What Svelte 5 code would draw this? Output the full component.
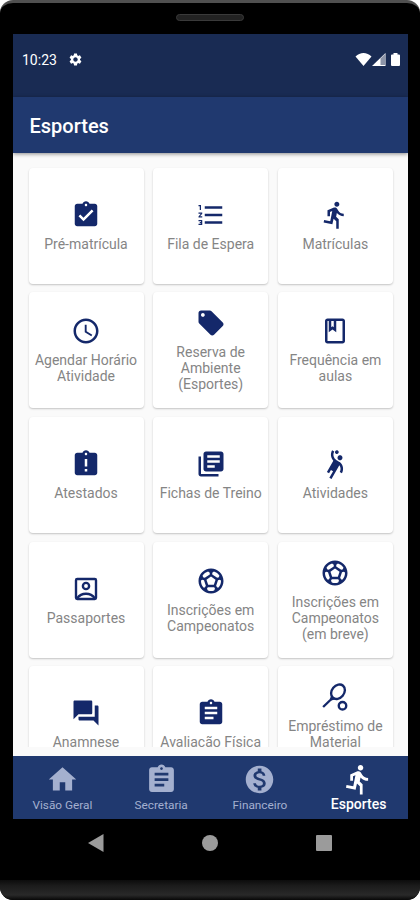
<script lang="ts">
  type Tile = { label: string; icon: string };

  const clipboard =
    "M19 3h-4.18C14.4 1.84 13.3 1 12 1c-1.3 0-2.4.84-2.82 2H5c-1.1 0-2 .9-2 2v14c0 1.1.9 2 2 2h14c1.1 0 2-.9 2-2V5c0-1.1-.9-2-2-2zm-7 0c.55 0 1 .45 1 1s-.45 1-1 1-1-.45-1-1 .45-1 1-1z";

  const icons: Record<string, string> = {
    done: clipboard + "m-2 14l-4-4 1.41-1.41L10 14.17l6.59-6.59L18 9l-8 8z",
    late: clipboard + "M13 18h-2v-2h2v2zm0-4h-2V8h2v6z",
    assignment: clipboard + "M14 17H7v-2h7v2zm3-4H7v-2h10v2zm0-4H7V7h10v2z",
    numbered:
      "M2 17h2v.5H3v1h1v.5H2v1h3v-4H2v1zm1-9h1V4H2v1h1v3zm-1 3h1.8L2 13.1v.9h3v-1H3.2L5 10.9V10H2v1zm5-6v2h14V5H7zm0 14h14v-2H7v2zm0-6h14v-2H7v2z",
    run: "M13.49 5.48c1.1 0 2-.9 2-2s-.9-2-2-2-2 .9-2 2 .9 2 2 2zm-3.6 13.9l1-4.4 2.1 2v6h2v-7.5l-2.1-2 .6-3c1.3 1.5 3.3 2.5 5.5 2.5v-2c-1.9 0-3.5-1-4.3-2.4l-1-1.6c-.4-.6-1-1-1.7-1-.3 0-.5.1-.8.1l-5.2 2.2v4.7h2v-3.4l1.8-.7-1.6 8.1-4.9-1-.4 2 7 1.4z",
    clock:
      "M11.99 2C6.47 2 2 6.48 2 12s4.47 10 9.99 10C17.52 22 22 17.52 22 12S17.52 2 11.99 2zM12 20c-4.42 0-8-3.58-8-8s3.58-8 8-8 8 3.58 8 8-3.58 8-8 8zm.5-13H11v6l5.25 3.15.75-1.23-4.5-2.67z",
    tag: "M21.41 11.58l-9-9C12.05 2.22 11.55 2 11 2H4c-1.1 0-2 .9-2 2v7c0 .55.22 1.05.59 1.42l9 9c.36.36.86.58 1.41.58.55 0 1.05-.22 1.41-.59l7-7c.37-.36.59-.86.59-1.41 0-.55-.23-1.06-.59-1.42zM5.5 7C4.67 7 4 6.33 4 5.5S4.67 4 5.5 4 7 4.67 7 5.5 6.33 7 5.5 7z",
    book: "M18 2H6c-1.1 0-2 .9-2 2v16c0 1.1.9 2 2 2h12c1.1 0 2-.9 2-2V4c0-1.1-.9-2-2-2zM9 4h2v5l-1-.75L9 9V4zm9 16H6V4h1v9l3-2.25L13 13V4h5v16z",
    library:
      "M4 6H2v14c0 1.1.9 2 2 2h14v-2H4V6zm16-4H8c-1.1 0-2 .9-2 2v12c0 1.1.9 2 2 2h12c1.1 0 2-.9 2-2V4c0-1.1-.9-2-2-2zm-1 9H9V9h10v2zm-4 4H9v-2h6v2zm4-8H9V5h10v2z",
    handball:
      "M14.27 6C13.72 6.95 14.05 8.18 15 8.73c.95.55 2.18.22 2.73-.73.55-.95.22-2.18-.73-2.73-.95-.55-2.18-.22-2.73.73zM15.84 10.41s-1.63-.94-2.6-1.5c-2.38-1.38-3.2-4.44-1.82-6.82l-1.73-1C8.1 3.83 8.6 7.21 10.66 9.4l-5.15 8.92 1.73 1 1.5-2.6 1.73 1-3 5.2 1.73 1 6.29-10.89c1.14 1.55 1.33 3.69.31 5.46l1.73 1c1.6-2.75 1.28-6.58-1.69-9.08zM12.75 3.8c.72.41 1.63.17 2.05-.55.41-.72.17-1.63-.55-2.05-.72-.41-1.63-.17-2.05.55-.41.72-.17 1.64.55 2.05z",
    soccer:
      "M12 2C6.48 2 2 6.48 2 12s4.48 10 10 10 10-4.48 10-10S17.52 2 12 2zm1 3.3l1.35-.95c1.82.56 3.37 1.76 4.38 3.34l-.39 1.34-1.35.46L13 6.7V5.3zm-3.35-.95L11 5.3v1.4L7.01 9.49l-1.35-.46-.39-1.34c1.01-1.57 2.56-2.77 4.38-3.34zM7.08 17.11l-1.14.1C4.73 15.81 4 13.99 4 12c0-.12.01-.23.02-.35l1-.73 1.38.48 1.46 4.34-.78 1.37zm7.42 2.48c-.79.26-1.63.41-2.5.41s-1.71-.15-2.5-.41l-.69-1.49.64-1.1h5.11l.64 1.11-.7 1.48zM14.27 15H9.73l-1.35-4.02L12 8.44l3.63 2.54L14.27 15zm3.79 2.21l-1.14-.1-.79-1.37 1.46-4.34 1.39-.47 1 .73c.01.11.02.22.02.34 0 1.99-.73 3.81-1.94 5.21z",
    forum:
      "M21 6h-2v9H6v2c0 .55.45 1 1 1h11l4 4V7c0-.55-.45-1-1-1zm-4 6V3c0-.55-.45-1-1-1H3c-.55 0-1 .45-1 1v14l4-4h10c.55 0 1-.45 1-1z",
    home: "M10 20v-6h4v6h5v-8h3L12 3 2 12h3v8z",
    money:
      "M12 2C6.48 2 2 6.48 2 12s4.48 10 10 10 10-4.48 10-10S17.52 2 12 2zm1.41 16.09V20h-2.67v-1.93c-1.71-.36-3.16-1.46-3.27-3.4h1.96c.1 1.05.82 1.87 2.65 1.87 1.96 0 2.4-.98 2.4-1.59 0-.83-.44-1.61-2.67-2.14-2.48-.6-4.18-1.62-4.18-3.67 0-1.72 1.39-2.84 3.11-3.21V4h2.67v1.95c1.86.45 2.79 1.86 2.85 3.39H14.3c-.05-1.11-.64-1.87-2.22-1.87-1.5 0-2.4.68-2.4 1.64 0 .84.65 1.39 2.67 1.91s4.18 1.39 4.18 3.91c-.01 1.83-1.38 2.83-3.12 3.16z",
    settings:
      "M19.14 12.94c.04-.3.06-.61.06-.94 0-.32-.02-.64-.07-.94l2.03-1.58c.18-.14.23-.41.12-.61l-1.92-3.32c-.12-.22-.37-.29-.59-.22l-2.39.96c-.5-.38-1.03-.7-1.62-.94l-.36-2.54c-.04-.24-.24-.41-.48-.41h-3.84c-.24 0-.43.17-.47.41l-.36 2.54c-.59.24-1.13.57-1.62.94l-2.39-.96c-.22-.08-.47 0-.59.22L2.74 8.87c-.12.21-.08.47.12.61l2.03 1.58c-.05.3-.09.63-.09.94s.02.64.07.94l-2.03 1.58c-.18.14-.23.41-.12.61l1.92 3.32c.12.22.37.29.59.22l2.39-.96c.5.38 1.03.7 1.62.94l.36 2.54c.05.24.24.41.48.41h3.84c.24 0 .44-.17.47-.41l.36-2.54c.59-.24 1.13-.56 1.62-.94l2.39.96c.22.08.47 0 .59-.22l1.92-3.32c.12-.22.07-.47-.12-.61l-2.01-1.58zM12 15.6c-1.98 0-3.6-1.62-3.6-3.6s1.62-3.6 3.6-3.6 3.6 1.62 3.6 3.6-1.62 3.6-3.6 3.6z",
  };

  const tiles: Tile[] = [
    { label: "Pré-matrícula", icon: "done" },
    { label: "Fila de Espera", icon: "numbered" },
    { label: "Matrículas", icon: "run" },
    { label: "Agendar Horário\nAtividade", icon: "clock" },
    { label: "Reserva de\nAmbiente\n(Esportes)", icon: "tag" },
    { label: "Frequência em\naulas", icon: "book" },
    { label: "Atestados", icon: "late" },
    { label: "Fichas de Treino", icon: "library" },
    { label: "Atividades", icon: "handball" },
    { label: "Passaportes", icon: "portrait" },
    { label: "Inscrições em\nCampeonatos", icon: "soccer" },
    { label: "Inscrições em\nCampeonatos\n(em breve)", icon: "soccer" },
    { label: "Anamnese", icon: "forum" },
    { label: "Avaliação Física", icon: "assignment" },
    { label: "Empréstimo de\nMaterial\n\u00a0", icon: "tennis" },
  ];

  const tabs: Tile[] = [
    { label: "Visão Geral", icon: "home" },
    { label: "Secretaria", icon: "assignment" },
    { label: "Financeiro", icon: "money" },
    { label: "Esportes", icon: "run" },
  ];

  let active = $state("Esportes");
</script>

{#snippet glyph(name: string)}
  <svg class="glyph" viewBox="0 0 24 24" aria-hidden="true">
    {#if name === "portrait"}
      <g class="line">
        <rect x="4" y="4" width="16" height="16" rx="1" />
        <circle cx="12" cy="9.6" r="2.5" />
        <path d="M5 19.3c1.6-2.3 4-3.5 7-3.5s5.4 1.2 7 3.5" />
      </g>
    {:else if name === "tennis"}
      <g class="line">
        <ellipse cx="14.4" cy="7.8" rx="4.9" ry="6.3" transform="rotate(40 14.4 7.8)" />
        <path d="M2.5 20L8.500 14.200Q9.300 13.300 9.500 11.800M8.500 14.200Q9.600 13.300 11.800 13.300" />
        <circle cx="18" cy="19" r="3" />
      </g>
    {:else}
      <path d={icons[name]} />
    {/if}
  </svg>
{/snippet}

<div class="device">
  <div class="bezel"><span class="speaker"></span></div>

  <div class="screen">
    <div class="status">
      <span class="time">10:23</span>
      <span class="gear">{@render glyph("settings")}</span>
      <svg class="signals" viewBox="0 0 46 15" aria-hidden="true">
        <path d="M.5 4.5C5-.2 12-.2 16.500 4.500L8.500 14z" />
        <path d="M17 14L30.500 1V14z" />
        <path class="dim" d="M25.500 6.500L30.500 1.500V13H25.500z" />
        <path d="M38.500 1h4v1.500h1.500q1 0 1 1V13q0 1-1 1h-7q-1 0-1-1V3.500q0-1 1-1h1.500z" />
      </svg>
    </div>

    <header>Esportes</header>

    <main>
      <div class="grid">
        {#each tiles as tile}
          <div class="card">
            {@render glyph(tile.icon)}
            <span>{tile.label}</span>
          </div>
        {/each}
      </div>
    </main>

    <nav>
      {#each tabs as tab}
        <button class:active={active === tab.label} onclick={() => (active = tab.label)}>
          {@render glyph(tab.icon)}
          <span>{tab.label}</span>
        </button>
      {/each}
    </nav>
  </div>

  <div class="system">
    <svg viewBox="0 0 16 18"><path d="M0 9L15.500 0V18z" /></svg>
    <svg viewBox="0 0 16 18"><circle cx="8" cy="9" r="8" /></svg>
    <svg viewBox="0 0 16 18"><rect y="1" width="16" height="16" rx="1" /></svg>
  </div>
  <div class="chin"></div>
</div>

<style>
  :global(body) {
    background: #fff;
  }
  .device {
    display: flex;
    flex-direction: column;
    box-sizing: border-box;
    width: 420px;
    height: 900px;
    overflow: hidden;
    border-top: 3px solid #505050;
    border-radius: 13px;
    background: #000;
    font-family: Roboto, sans-serif;
  }
  .bezel {
    display: flex;
    justify-content: center;
    height: 31px;
    flex: none;
  }
  .speaker {
    box-sizing: border-box;
    width: 68px;
    height: 7px;
    margin-top: 11px;
    border: 1px solid #3a3a3a;
    border-radius: 4px;
    background: #222;
  }
  .screen {
    display: flex;
    flex-direction: column;
    width: 395px;
    height: 785px;
    flex: none;
    margin-left: 13px;
    background: #fafafa;
  }
  .glyph {
    display: block;
    width: 30px;
    height: 30px;
    flex: none;
    fill: currentColor;
  }
  .line {
    fill: none;
    stroke: currentColor;
    stroke-width: 1.9;
  }
  .status {
    display: flex;
    align-items: center;
    box-sizing: border-box;
    height: 63px;
    flex: none;
    padding: 0 7px 12px 9px;
    background: #192b53;
    color: #fff;
  }
  .time {
    width: 46px;
    font-size: 14px;
  }
  .gear .glyph {
    width: 15px;
    height: 15px;
  }
  .signals {
    width: 46px;
    height: 15px;
    margin-left: auto;
    fill: #fff;
  }
  .signals .dim {
    fill: #8d95a8;
  }
  header {
    z-index: 1;
    height: 56px;
    flex: none;
    padding-left: 16.5px;
    background: #20396f;
    box-shadow: 0 1px 4px rgba(0, 0, 0, 0.45);
    color: #fff;
    font-size: 20px;
    font-weight: 500;
    line-height: 59px;
  }
  main {
    height: 594px;
    flex: none;
    overflow: hidden;
  }
  .grid {
    display: grid;
    grid-template-columns: repeat(3, 115px);
    grid-auto-rows: 116px;
    gap: 8.6px 9.7px;
    padding: 14.8px 15.5px;
  }
  .card {
    display: flex;
    flex-direction: column;
    align-items: center;
    justify-content: center;
    gap: 6px;
    border-radius: 4px;
    background: #fff;
    box-shadow: 0 1px 2px rgba(0, 0, 0, 0.22);
    color: #14286a;
  }
  .card span {
    color: #858585;
    font-size: 14px;
    line-height: 16px;
    text-align: center;
    white-space: pre;
  }
  nav {
    display: grid;
    grid-template-columns: repeat(4, 1fr);
    height: 63px;
    flex: none;
    margin-top: 9px;
    background: #20396f;
  }
  button {
    display: flex;
    flex-direction: column;
    align-items: center;
    padding: 7px 0 0;
    border: 0;
    background: none;
    color: #a4b0cf;
    font: 11.8px/18px Roboto, sans-serif;
    white-space: nowrap;
  }
  button .glyph {
    width: 33px;
    height: 33px;
  }
  button.active {
    color: #fff;
    font-size: 14px;
    font-weight: 500;
    line-height: 16px;
  }
  .system {
    display: flex;
    justify-content: space-between;
    align-items: center;
    height: 48px;
    flex: none;
    padding: 0 88px;
  }
  .system svg {
    width: 16px;
    height: 18px;
    fill: #9b9b9b;
  }
  .chin {
    flex: 1;
    margin-top: 13px;
    background: linear-gradient(#0c0c0c, #1c1c1c 30%, #292929 75%, #080808);
  }
</style>
